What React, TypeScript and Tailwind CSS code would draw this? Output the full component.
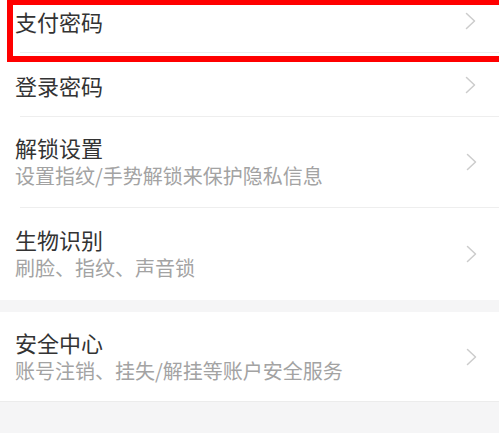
import React from "react";

const Chevron = () => (
  <svg width="11" height="18" viewBox="0 0 11 18" className="shrink-0">
    <polyline points="1.5,1.5 9.5,9 1.5,16.5" fill="none" stroke="#cccccc" strokeWidth="1.5" strokeLinecap="round" strokeLinejoin="round" />
  </svg>
);

const Divider = () => <div className="ml-[20px] h-px bg-[#eeeeee]" />;

const TwoLine = ({ title, sub, h }: { title: string; sub: string; h: string }) => (
  <div className={`flex items-center justify-between pl-[15px] pr-[22px] ${h}`}>
    <div className="flex flex-col">
      <div className="text-[22px] leading-[28px] text-[#333333]">{title}</div>
      <div className="text-[20px] leading-[30px] text-[#a3a3a3]">{sub}</div>
    </div>
    <Chevron />
  </div>
);

export default function App() {
  return (
    <div
      className="relative w-[499px] h-[433px] overflow-hidden bg-[#f5f5f6]"
      style={{ fontFamily: '"Noto Sans CJK SC", "Noto Sans", sans-serif' }}
    >
      <div className="bg-white">
        <div className="flex h-[52px] items-center justify-between pb-[10px] pl-[15px] pr-[23px]">
          <span className="text-[22px] leading-[28px] text-[#333333]">支付密码</span>
          <Chevron />
        </div>
        <Divider />
        <div className="flex h-[63px] items-center justify-between pl-[15px] pr-[23px] pt-[1px]">
          <span className="text-[22px] leading-[28px] text-[#333333]">登录密码</span>
          <Chevron />
        </div>
        <Divider />
        <TwoLine h="h-[90px]" title="解锁设置" sub="设置指纹/手势解锁来保护隐私信息" />
        <Divider />
        <TwoLine h="h-[92px]" title="生物识别" sub="刷脸、指纹、声音锁" />
      </div>
      <div className="h-[12px]" />
      <div className="border-b border-[#ececec] bg-white">
        <TwoLine h="h-[89px]" title="安全中心" sub="账号注销、挂失/解挂等账户安全服务" />
      </div>
      <div className="absolute left-[7px] top-[-1px] h-[63px] w-[520px] border-[6px] border-[#ff0000]" />
    </div>
  );
}
